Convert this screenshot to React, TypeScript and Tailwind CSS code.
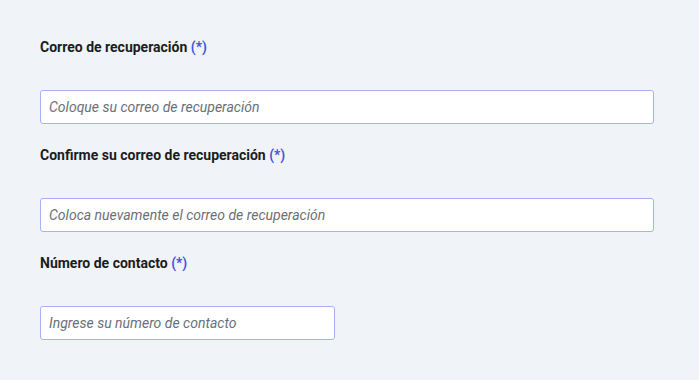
export default function App() {
  const font = { fontFamily: "Roboto, 'Noto Sans', sans-serif" };
  const Field = ({ label, placeholder, w }: { label: string; placeholder: string; w: string }) => (
    <div className="flex flex-col">
      <label className="text-[14px] leading-5 font-bold text-[#1a1d21]">
        {label} <span className="text-[#4451e0] font-semibold">(*)</span>
      </label>
      <input
        className={`mt-[33px] h-[34px] ${w} rounded-[3px] border border-[#a5b1f5] bg-white px-2 text-[14px] text-[#333] placeholder:italic placeholder:text-[#6b6f76] outline-none`}
        placeholder={placeholder}
      />
    </div>
  );
  return (
    <div className="w-[699px] h-[380px] bg-[#f0f3f7] pl-10 pt-[37px] flex flex-col gap-[21px]" style={font}>
      <Field label="Correo de recuperación" placeholder="Coloque su correo de recuperación" w="w-[614px]" />
      <Field label="Confirme su correo de recuperación" placeholder="Coloca nuevamente el correo de recuperación" w="w-[614px]" />
      <Field label="Número de contacto" placeholder="Ingrese su número de contacto" w="w-[295px]" />
    </div>
  );
}
